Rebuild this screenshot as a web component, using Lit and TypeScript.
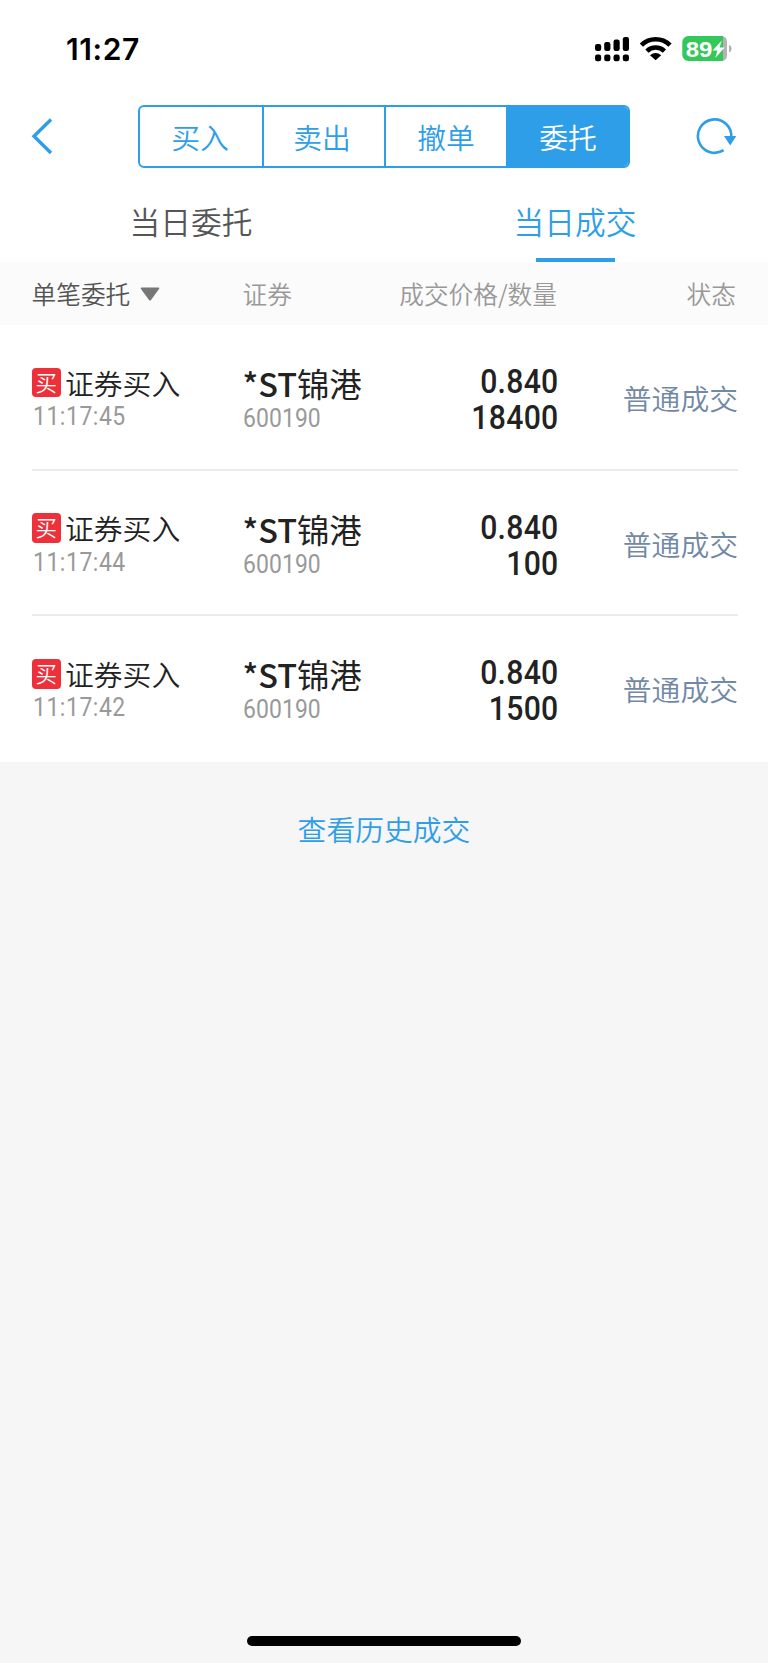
import { LitElement, html, svg, css } from "lit";
import { customElement, property, state } from "lit/decorators.js";
import { classMap } from "lit/directives/class-map.js";

interface Deal {
  time: string;
  price: string;
  amount: string;
}

const DEALS: Deal[] = [
  { time: "11:17:45", price: "0.840", amount: "18400" },
  { time: "11:17:44", price: "0.840", amount: "100" },
  { time: "11:17:42", price: "0.840", amount: "1500" },
];

// x, top and height of the four dual-SIM signal bars
const BARS = [
  [595, 44, 7],
  [604.2, 42, 9],
  [613.5, 39.5, 11.5],
  [622.8, 37, 14],
];

@customElement("status-bar")
class StatusBar extends LitElement {
  static styles = css`
    :host {
      display: flex;
      justify-content: space-between;
      height: 98px;
      padding: 0 35px 0 66px;
      box-sizing: border-box;
      color: #000;
    }
    .clock {
      font: 600 30px/98px Inter, sans-serif;
      letter-spacing: 0.6px;
    }
    .icons {
      display: block;
      width: 140px;
      height: 98px;
    }
    .level {
      font: 700 22.5px "Liberation Sans", sans-serif;
    }
  `;
  render() {
    return html`
      <span class="clock">11:27</span>
      <svg class="icons" viewBox="593 0 140 98">
        ${BARS.map(
          ([x, y, h]) => svg`
            <rect x=${x} y=${y} width="6.2" height=${h} rx="2.2"/>
            <rect x=${x} y="54.6" width="6.2" height="6.6" rx="2.2"/>`
        )}
        <g fill="none" stroke="#000" stroke-width="4.6">
          <path d="M641.4 45.1A20.5 20.5 0 0 1 670 45.1" />
          <path d="M646.9 51.1A12.6 12.6 0 0 1 664.4 51.1" />
        </g>
        <path d="M650 55.3Q655.6 50.6 661.2 55.3L655.6 60.2Z" />
        <path d="M688.5 36H721.5A5.5 5.5 0 0 1 727 41.5V55.5A5.5 5.5 0 0 1 721.5 61H688.5Z" fill="#b3b3b5" />
        <path d="M688.5 36H723V61H688.5A6 6 0 0 1 682.3 55V42A6 6 0 0 1 688.5 36Z" fill="#34c759" />
        <path d="M729 44.8Q731.7 46 731.7 48.7Q731.7 51.4 729 52.6Z" fill="#b3b3b5" />
        <text class="level" x="685.8" y="56.6" fill="#fff" textLength="26.6" lengthAdjust="spacingAndGlyphs">89</text>
        <path d="M721.8 40.5L712.6 50.5H717.4L715.3 58L724.6 47.5H719.6Z" fill="#fff" />
      </svg>
    `;
  }
}

@customElement("nav-bar")
class NavBar extends LitElement {
  @state() active = 3;
  static styles = css`
    :host {
      display: flex;
      align-items: center;
      height: 76px;
      padding: 0 30px 0 31px;
    }
    .back {
      width: 24px;
      height: 38px;
      margin-right: 83px;
    }
    .segments {
      display: grid;
      grid-template-columns: 124px 122px 122px 120px;
      height: 63px;
      box-sizing: border-box;
      border-radius: 6px;
      border: 2px solid #2f9ee9;
      overflow: hidden;
    }
    .segment {
      border: 0;
      border-right: 2px solid #2f9ee9;
      padding: 0 2px 0 0;
      background: none;
      color: #2f9ee9;
      font: 350 28.8px/60px "Noto Sans CJK SC", sans-serif;
    }
    .segment:nth-child(2) {
      padding-right: 4px;
    }
    .segment:nth-child(n + 3) {
      padding: 0;
    }
    .segment:last-child {
      border-right: 0;
    }
    .on {
      background: #2f9ee9;
      color: #fff;
    }
    .refresh {
      width: 42px;
      height: 40px;
      margin-left: auto;
    }
  `;
  render() {
    return html`
      <svg class="back" viewBox="31 117 24 38">
        <path d="M51 119.5L34 136.2L51 153" fill="none" stroke="#2f9ee9" stroke-width="3.4" />
      </svg>
      <div class="segments">
        ${["买入", "卖出", "撤单", "委托"].map(
          (t, i) => html`<button
            class=${classMap({ segment: true, on: i === this.active })}
            @click=${() => (this.active = i)}
          >${t}</button>`
        )}
      </div>
      <svg class="refresh" viewBox="696 116 42 40">
        <path d="M723.6 150.2A16.7 16.7 0 1 1 731.3 137" fill="none" stroke="#2f9ee9" stroke-width="2.6" />
        <path d="M724 136H736.3L730.2 145.5Z" fill="#2f9ee9" />
      </svg>
    `;
  }
}

@customElement("deal-row")
class DealRow extends LitElement {
  @property({ attribute: false }) deal!: Deal;
  static styles = css`
    :host {
      display: grid;
      grid-template-columns: 211px 150px 165.5px 1fr;
      height: 145.7px;
      margin: 0 30px 0 31.5px;
      padding-top: 37px;
      box-sizing: border-box;
      border-bottom: 2px solid #ebebeb;
      font-family: Roboto, "Noto Sans CJK SC", sans-serif;
      color: #222;
      white-space: nowrap;
    }
    :host(:last-of-type) {
      border-bottom-color: transparent;
    }
    .kind {
      display: flex;
      align-items: center;
      gap: 4px;
      height: 41px;
      font: 350 28.8px/40px "Noto Sans CJK SC", sans-serif;
    }
    .badge {
      width: 29.5px;
      height: 29.5px;
      border-radius: 4px;
      background: #ee303a;
      color: #fff;
      font-size: 21.5px;
      line-height: 28px;
      text-align: center;
    }
    .small {
      font-size: 25.2px;
      font-weight: 400;
      line-height: 28px;
      color: #999;
      letter-spacing: 0.1px;
      transform: scaleX(0.91);
      transform-origin: left;
    }
    .time {
      margin-left: 1.5px;
      letter-spacing: 0.6px;
    }
    .name {
      height: 43px;
      font: 400 32.4px/42px "Noto Sans CJK SC", sans-serif;
    }
    .latin {
      font-weight: 500;
    }
    .figures {
      display: flex;
      flex-direction: column;
      align-items: flex-end;
      font-weight: 500;
      font-size: 32.8px;
      line-height: 36px;
      letter-spacing: 0.3px;
      padding-top: 2px;
      transform: scaleX(0.92);
      transform-origin: right;
    }
    .status {
      text-align: right;
      font: 350 28.8px/71px "Noto Sans CJK SC", sans-serif;
      color: #7189a5;
    }
  `;
  render() {
    return html`
      <div>
        <div class="kind"><span class="badge">买</span>证券买入</div>
        <div class="small time">${this.deal.time}</div>
      </div>
      <div>
        <div class="name"><span class="latin">*ST</span>锦港</div>
        <div class="small">600190</div>
      </div>
      <div class="figures"><span>${this.deal.price}</span><span>${this.deal.amount}</span></div>
      <div class="status">普通成交</div>
    `;
  }
}

@customElement("app-root")
class AppRoot extends LitElement {
  static styles = css`
    :host {
      display: flex;
      flex-direction: column;
      height: 1663px;
      background: #f6f6f6;
      font-family: "Noto Sans CJK SC", sans-serif;
      font-weight: 350;
    }
    .top {
      background: #fff;
    }
    .tabs {
      display: grid;
      grid-template-columns: 1fr 1fr;
      height: 88px;
      margin: 0 1px 0 -1px;
    }
    .tab {
      display: flex;
      flex-direction: column;
      align-items: center;
      justify-content: space-between;
      font-size: 30.7px;
      line-height: 94px;
      color: #555;
      height: 88px;
    }
    .label {
      height: 84px;
    }
    .current {
      color: #2f9ee9;
    }
    .current::after {
      content: "";
      width: 79px;
      height: 4px;
      background: #2f9ee9;
    }
    .head {
      display: grid;
      grid-template-columns: 211px 150px 164.5px 1fr;
      height: 63px;
      padding: 0 32px 0 31.5px;
      background: #fbfbfb;
      color: #999;
      font-size: 24.7px;
      line-height: 63px;
      white-space: nowrap;
    }
    .filter {
      display: flex;
      align-items: center;
      gap: 10px;
      color: #555;
    }
    .caret {
      width: 20px;
      height: 14px;
    }
    .end {
      justify-self: end;
    }
    .history {
      flex: 1;
      padding-top: 46px;
      text-align: center;
      font-size: 28.8px;
      line-height: 41px;
      color: #2f9ee9;
    }
    .home {
      align-self: center;
      width: 274px;
      height: 10px;
      margin-bottom: 17px;
      border-radius: 5px;
      background: #000;
    }
  `;
  render() {
    return html`
      <div class="top">
        <status-bar></status-bar>
        <nav-bar></nav-bar>
        <div class="tabs">
          <div class="tab"><span class="label">当日委托</span></div>
          <div class="tab current"><span class="label">当日成交</span></div>
        </div>
        <div class="head">
          <span class="filter">单笔委托
            <svg class="caret" viewBox="0 0 20 14"><path d="M1.5 .5H18.5Q20 .5 19 2L11 13Q10 14 9 13L1 2Q0 .5 1.5 .5Z" fill="#777" /></svg>
          </span>
          <span>证券</span>
          <span class="end">成交价格/数量</span>
          <span class="end">状态</span>
        </div>
        ${DEALS.map((d) => html`<deal-row .deal=${d}></deal-row>`)}
      </div>
      <div class="history">查看历史成交</div>
      <div class="home"></div>
    `;
  }
}
